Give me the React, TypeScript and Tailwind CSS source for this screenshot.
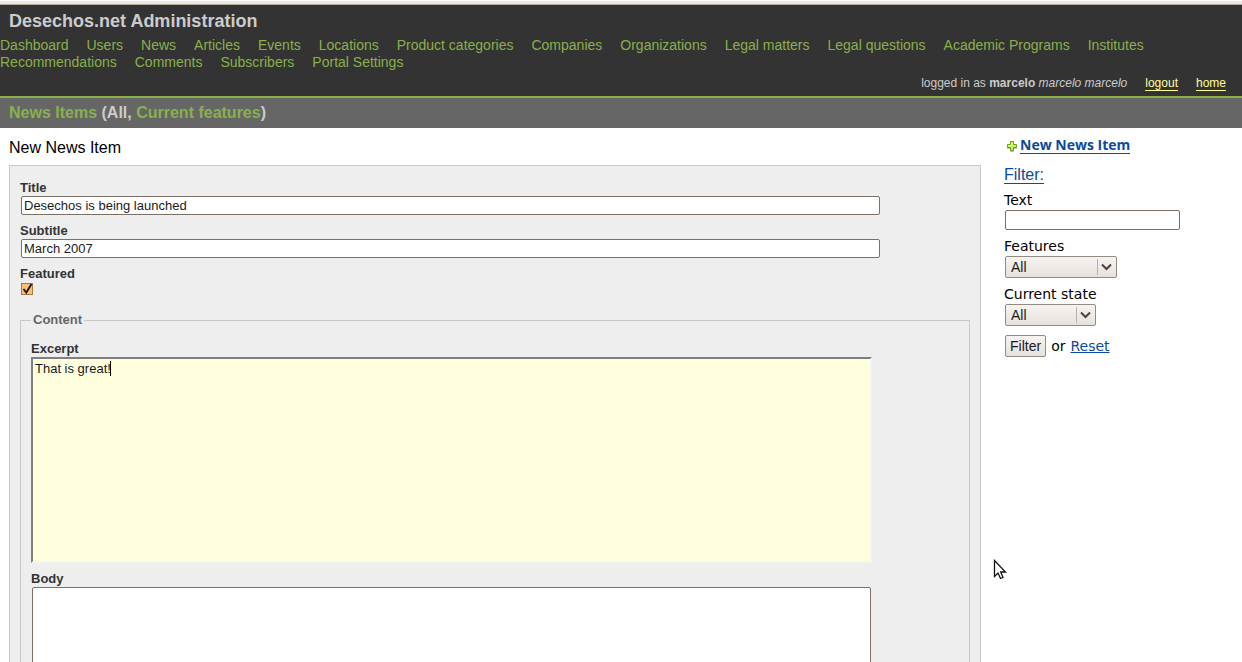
import { useState } from "react";
import type { ReactNode } from "react";

const sections = [
  "Dashboard",
  "Users",
  "News",
  "Articles",
  "Events",
  "Locations",
  "Product categories",
  "Companies",
  "Organizations",
  "Legal matters",
  "Legal questions",
  "Academic Programs",
  "Institutes",
  "Recommendations",
  "Comments",
  "Subscribers",
  "Portal Settings",
];

function Header() {
  return (
    <header className="border-b-2 border-[#8ab04c] bg-[#333333] pt-1 text-[#cccccc]">
      <h1 className="px-[9px] text-[18px] leading-6 font-bold">Desechos.net Administration</h1>
      <nav className="flex flex-wrap gap-x-[18px] pt-1 pr-20 text-[14px] leading-[17px] text-[#8ab04c]">
        {sections.map((name) => (
          <a key={name} href="#" className="whitespace-nowrap">
            {name}
          </a>
        ))}
      </nav>
      <div className="flex items-baseline justify-end gap-[18px] px-4 pt-1 pb-[5px] text-[12px] leading-4">
        <p>
          logged in as <strong>marcelo</strong> <em>marcelo marcelo</em>
        </p>
        <a href="#" className="border-b border-[#ffff99] leading-[13px] text-[#ffff99]">
          logout
        </a>
        <a href="#" className="border-b border-[#ffff99] leading-[13px] text-[#ffff99]">
          home
        </a>
      </div>
    </header>
  );
}

function TextField({ id, label, value }: { id: string; label: string; value: string }) {
  return (
    <div className="mb-2 flex flex-col">
      <label htmlFor={id} className="text-[13px] leading-4 font-bold">
        {label}
      </label>
      <input
        id={id}
        type="text"
        defaultValue={value}
        className="ml-px h-[19px] w-[90.4%] rounded-[2px] border border-[#7c6f66] bg-white px-[2px] text-[13px] leading-4 text-[#1a1a1a] outline-none"
      />
    </div>
  );
}

function SelectField({ id, label, width }: { id: string; label: string; width: string }) {
  return (
    <div className="flex flex-col items-start">
      <label htmlFor={id} className="leading-[18px]">
        {label}
      </label>
      <div className={`relative mt-px ml-px ${width}`}>
        <select
          id={id}
          className="block h-[22px] w-full appearance-none rounded-[2px] border border-[#948a80] bg-linear-to-b from-[#f6f4f2] to-[#e6e1db] px-[5px] font-['Liberation_Sans',sans-serif] text-[14px] text-[#1a1a1a]"
        >
          <option>All</option>
        </select>
        <svg
          className="pointer-events-none absolute top-0 right-0 h-[22px] w-5"
          viewBox="0 0 20 22"
          fill="none"
          aria-hidden="true"
        >
          <path d="M0.5 3v16" stroke="#b9b0a8" />
          <path d="M5 8.500l4.500 4.500L14 8.500" stroke="#444444" strokeWidth="2" />
        </svg>
      </div>
    </div>
  );
}

function PlusIcon() {
  return (
    <svg className="h-[12px] w-[12px]" viewBox="0 0 12 12" aria-hidden="true">
      <path d="M4 11.500h4M1 8.500h3M8 8.500h3" stroke="#000000" strokeOpacity="0.25" />
      <path
        d="M4.500 1.500h3v3h3v3h-3v3h-3v-3h-3v-3h3z"
        fill="#c9ee5a"
        stroke="#62a01c"
        strokeLinejoin="round"
      />
      <path d="M5.500 2.500v3h-3" stroke="#edfbc0" fill="none" />
    </svg>
  );
}

function Sidebar() {
  return (
    <aside className="w-[238px] shrink-0 pt-[9px] font-['DejaVu_Sans',sans-serif] text-[14px] text-black">
      <div className="flex items-center gap-[2px] pl-[2px]">
        <PlusIcon />
        <a
          href="#"
          className="border-b border-[#0b4a9c] font-['Open_Sans',sans-serif] text-[14px] leading-4 font-bold text-[#0b4a9c]"
        >
          New News Item
        </a>
      </div>
      <h2 className="flex pt-[12px] font-['Liberation_Sans',sans-serif] text-[16px]">
        <a href="#" className="border-b border-[#0b4a9c] leading-[17px] text-[#0b4a9c]">
          Filter:
        </a>
      </h2>
      <form className="flex flex-col gap-[7px] pt-[7px]">
        <div className="flex flex-col items-start">
          <label htmlFor="filter-text" className="leading-[18px]">
            Text
          </label>
          <input
            id="filter-text"
            type="text"
            className="mt-px ml-px h-5 w-[175px] rounded-[2px] border border-[#7c6f66] bg-white px-1 outline-none"
          />
        </div>
        <SelectField id="features" label="Features" width="w-[112px]" />
        <SelectField id="state" label="Current state" width="w-[91px]" />
        <div className="flex items-center pt-[2px]">
          <button
            type="button"
            className="ml-px h-[22px] rounded-[2px] border border-[#948a80] bg-linear-to-b from-[#f6f4f2] to-[#e6e1db] px-1 font-['Liberation_Sans',sans-serif] text-[14px] leading-5 text-[#1a1a1a]"
          >
            Filter
          </button>
          <span className="px-[5px]">or</span>
          <a href="#" className="text-[#0b4a9c] underline">
            Reset
          </a>
        </div>
      </form>
    </aside>
  );
}

function FeaturedBox() {
  const [checked, setChecked] = useState(true);
  return (
    <div className="flex flex-col items-start">
      <label htmlFor="featured" className="text-[13px] leading-4 font-bold">
        Featured
      </label>
      <div className="relative mt-px ml-px h-3 w-3">
        <input
          id="featured"
          type="checkbox"
          checked={checked}
          onChange={(e) => setChecked(e.target.checked)}
          className="block h-3 w-3 appearance-none border border-[#a8783c] bg-white checked:bg-[#fdbf6f]"
        />
        {checked && (
          <svg className="pointer-events-none absolute inset-0 h-3 w-3" viewBox="0 0 12 12" fill="none" aria-hidden="true">
            <path d="M2.500 6l2.800 3.500L10.500 1" stroke="#1a1a1a" strokeWidth="1.900" />
          </svg>
        )}
      </div>
    </div>
  );
}

function Area({ id, label, children }: { id: string; label: string; children: ReactNode }) {
  return (
    <div className="mb-2 flex flex-col">
      <label htmlFor={id} className="text-[13px] leading-4 font-bold">
        {label}
      </label>
      {children}
    </div>
  );
}

function NewsForm() {
  return (
    <form className="border border-[#c8c8c8] bg-[#eeeeee] px-[10px] pt-[14px] pb-6 text-[#333333]">
      <TextField id="title" label="Title" value="Desechos is being launched" />
      <TextField id="subtitle" label="Subtitle" value="March 2007" />
      <FeaturedBox />
      <fieldset className="mt-[17px] border border-[#c8c8c8] px-[10px] pb-3">
        <legend className="px-[2px] text-[13px] leading-4 font-bold text-[#666666]">Content</legend>
        <div className="pt-[13px]">
          <Area id="excerpt" label="Excerpt">
            <div className="relative w-[90.6%]">
              <textarea
                id="excerpt"
                defaultValue="That is great!"
                className="block h-[206px] w-full resize-none border-2 border-t-[#7f7f7f] border-r-[#f4f4f4] border-b-[#f4f4f4] border-l-[#7f7f7f] bg-[#ffffdd] px-[2px] pt-[2px] text-[13px] leading-4 text-[#1a1a1a] outline-none"
              />
              <span className="absolute top-1 left-[79px] h-[15px] w-px bg-black" />
            </div>
          </Area>
          <Area id="body" label="Body">
            <textarea
              id="body"
              className="ml-px block h-[206px] w-[90.4%] resize-none rounded-[2px] border border-[#7c6f66] bg-white p-1 text-[13px] leading-4 outline-none"
            />
          </Area>
        </div>
      </fieldset>
    </form>
  );
}

export default function App() {
  return (
    <div className="h-screen overflow-y-auto bg-white font-['Liberation_Sans',sans-serif] [scrollbar-width:none]">
      <div className="mt-px h-1 border-b border-[#b5aa9c] bg-[#ece8e1]" />
      <Header />
      <div className="bg-[#666666] px-[9px] py-[5px] text-[16px] leading-5 font-bold text-[#cccccc]">
        <a href="#" className="text-[#8ab04c]">
          News Items
        </a>{" "}
        (All,{" "}
        <a href="#" className="text-[#8ab04c]">
          Current features
        </a>
        )
      </div>
      <div className="flex gap-[23px] pl-[9px]">
        <main className="min-w-0 flex-1">
          <h2 className="pt-[10px] pb-[7px] text-[16px] leading-5 text-black">New News Item</h2>
          <NewsForm />
        </main>
        <Sidebar />
      </div>
      <svg
        className="pointer-events-none absolute top-[559px] left-[993px] h-[21px] w-[14px]"
        viewBox="0 0 14 21"
        aria-hidden="true"
      >
        <path
          d="M1.500 1.500v16l3.500-3.500 2.500 5.500 2.500-1-2.300-5.500h4.800z"
          fill="#ffffff"
          stroke="#111111"
          strokeWidth="1.300"
        />
      </svg>
    </div>
  );
}
